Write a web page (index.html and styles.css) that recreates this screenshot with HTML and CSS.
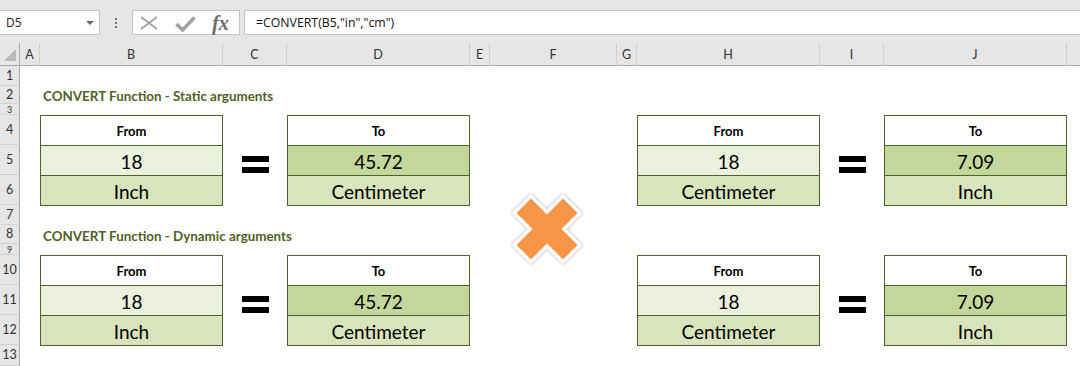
FILE: index.html
```html
<!DOCTYPE html>
<html>
<head>
<meta charset="utf-8">
<link rel="stylesheet" href="styles.css">
</head>
<body>
<div class="toolbar">
  <div class="namebox"><span class="nb-text">D5</span><span class="caret"></span></div>
  <div class="dots"><i></i><i></i><i></i></div>
  <div class="fxbox">
    <svg class="ic-cancel" width="18" height="14" viewBox="0 0 18 14"><path d="M1 1 L17 13 M17 1 L1 13" stroke="#a3a3a3" stroke-width="1.8" fill="none"/></svg>
    <svg class="ic-check" width="21" height="16" viewBox="0 0 21 16"><path d="M1.5 8 L7.5 14 L19.5 1.5" stroke="#a3a3a3" stroke-width="3.6" fill="none"/></svg>
    <span class="fx">fx</span>
  </div>
  <div class="formula">=CONVERT(B5,"in","cm")</div>
</div>

<div class="sheet">
  <div class="corner"><span class="tri"></span></div>
  <div class="ch">A</div><div class="ch">B</div><div class="ch">C</div><div class="ch">D</div><div class="ch">E</div><div class="ch">F</div><div class="ch">G</div><div class="ch">H</div><div class="ch">I</div><div class="ch">J</div><div class="ch ch-last"></div>

  <div class="rh r1">1</div>
  <div class="rh r2">2</div>
  <div class="rh r3 short">3</div>
  <div class="rh r4">4</div>
  <div class="rh r5">5</div>
  <div class="rh r6">6</div>
  <div class="rh r7">7</div>
  <div class="rh r8">8</div>
  <div class="rh r9 short">9</div>
  <div class="rh r10">10</div>
  <div class="rh r11">11</div>
  <div class="rh r12">12</div>
  <div class="rh r13">13</div>

  <div class="title t-static">CONVERT Function - Static arguments</div>
  <div class="title t-dynamic">CONVERT Function - Dynamic arguments</div>

  <div class="tbl set1 colB">
    <div class="cell head">From</div>
    <div class="cell val from">18</div>
    <div class="cell unit">Inch</div>
  </div>
  <div class="eq set1 colC"><i></i><i></i></div>
  <div class="tbl set1 colD">
    <div class="cell head">To</div>
    <div class="cell val to">45.72</div>
    <div class="cell unit">Centimeter</div>
  </div>

  <div class="tbl set1 colH">
    <div class="cell head">From</div>
    <div class="cell val from">18</div>
    <div class="cell unit">Centimeter</div>
  </div>
  <div class="eq set1 colI"><i></i><i></i></div>
  <div class="tbl set1 colJ">
    <div class="cell head">To</div>
    <div class="cell val to">7.09</div>
    <div class="cell unit">Inch</div>
  </div>

  <div class="tbl set2 colB">
    <div class="cell head">From</div>
    <div class="cell val from">18</div>
    <div class="cell unit">Inch</div>
  </div>
  <div class="eq set2 colC"><i></i><i></i></div>
  <div class="tbl set2 colD">
    <div class="cell head">To</div>
    <div class="cell val to">45.72</div>
    <div class="cell unit">Centimeter</div>
  </div>

  <div class="tbl set2 colH">
    <div class="cell head">From</div>
    <div class="cell val from">18</div>
    <div class="cell unit">Centimeter</div>
  </div>
  <div class="eq set2 colI"><i></i><i></i></div>
  <div class="tbl set2 colJ">
    <div class="cell head">To</div>
    <div class="cell val to">7.09</div>
    <div class="cell unit">Inch</div>
  </div>

  <svg class="xmark" width="80" height="82" viewBox="-40 -41 80 82">
    <path d="M0 -17 L16 -33 L33 -16 L17 0 L33 16 L16 33 L0 17 L-16 33 L-33 16 L-17 0 L-33 -16 L-16 -33 Z" fill="#f79646" stroke="#ffffff" stroke-width="3.5" stroke-linejoin="miter"/>
  </svg>
</div>
</body>
</html>
```

FILE: styles.css
```css
* { box-sizing: border-box; }
html, body { margin: 0; padding: 0; }
body {
  width: 1080px;
  height: 366px;
  overflow: hidden;
  background: #ffffff;
  font-family: "Open Sans", "Noto Sans", sans-serif;
}

/* ---------- formula bar ---------- */
.toolbar {
  height: 43px;
  background: #e6e6e6;
  padding-top: 10px;
  display: flex;
  align-items: flex-start;
}
.namebox {
  width: 100px;
  height: 25px;
  background: #fff;
  border: 1px solid #c6c6c6;
  border-left: none;
  display: flex;
  align-items: center;
  justify-content: space-between;
  padding: 0 6px 0 6px;
}
.nb-text { font-size: 12px; color: #222; }
.caret {
  width: 0; height: 0;
  border-left: 4px solid transparent;
  border-right: 4px solid transparent;
  border-top: 4px solid #6b6b6b;
  margin-right: -1px;
}
.dots {
  width: 32px;
  height: 25px;
  display: flex;
  flex-direction: column;
  align-items: center;
  justify-content: center;
  gap: 2px;
}
.dots i { display: block; width: 2px; height: 2px; background: #6e6e6e; }
.fxbox {
  width: 108px;
  height: 25px;
  background: #fff;
  border: 1px solid #c6c6c6;
  display: flex;
  align-items: center;
  padding-left: 7px;
}
.ic-cancel { margin-top: 1px; }
.ic-check { margin-left: 17px; margin-top: 2px; }
.fx {
  margin-left: 16px;
  font-family: "Liberation Serif", "DejaVu Serif", serif;
  font-style: italic;
  font-weight: bold;
  font-size: 21px;
  color: #6f6f6f;
  line-height: 20px;
  letter-spacing: -0.5px;
}
.formula {
  flex: 1;
  margin-left: 4px;
  height: 25px;
  background: #fff;
  border: 1px solid #c6c6c6;
  border-right: none;
  font-size: 12.3px;
  color: #111;
  line-height: 23px;
  padding-left: 11px;
}

/* ---------- sheet grid ---------- */
.sheet {
  position: relative;
  display: grid;
  grid-template-columns: 20px 20px 183px 64px 183px 20px 127px 20px 183px 64px 183px 1fr;
  grid-template-rows: 23px 20px 18px 11px 30px 30px 30px 20px 19px 11px 30px 30px 30px 21px;
  font-family: "Lato", "Open Sans", sans-serif;
}
.corner {
  grid-row: 1; grid-column: 1;
  background: #e6e6e6;
  border-right: 1px solid #a9a9a9;
  border-bottom: 1px solid #a9a9a9;
  position: relative;
}
.tri {
  position: absolute;
  right: 3px; bottom: 4px;
  width: 0; height: 0;
  border-left: 12px solid transparent;
  border-bottom: 12px solid #b9b9b9;
}
.ch {
  grid-row: 1;
  background: #e6e6e6;
  border-bottom: 1px solid #a9a9a9;
  border-right: 1px solid #cfcfcf;
  font-size: 12.5px;
  color: #333;
  display: flex;
  align-items: center;
  justify-content: center;
  padding-top: 1px;
}
.ch-last { border-right: none; }

.rh {
  grid-column: 1;
  background: #e6e6e6;
  border-right: 1px solid #a9a9a9;
  border-bottom: 1px solid #d2d2d2;
  font-size: 12.5px;
  color: #333;
  display: flex;
  align-items: center;
  justify-content: center;
  overflow: hidden;
  line-height: 1;
  padding-top: 1px;
}
.rh.short { font-size: 9px; padding-top: 0; }
.r1 { grid-row: 2; } .r2 { grid-row: 3; } .r3 { grid-row: 4; }
.r4 { grid-row: 5; } .r5 { grid-row: 6; } .r6 { grid-row: 7; }
.r7 { grid-row: 8; } .r8 { grid-row: 9; } .r9 { grid-row: 10; }
.r10 { grid-row: 11; } .r11 { grid-row: 12; } .r12 { grid-row: 13; }
.r13 { grid-row: 14; }

.title {
  grid-column: 3 / span 3;
  align-self: end;
  padding-left: 3px;
  font-weight: bold;
  font-size: 13.4px;
  color: #4f6228;
  line-height: 16px;
  white-space: nowrap;
}
.t-static { grid-row: 3; margin-bottom: 0; }
.t-dynamic { grid-row: 9; margin-bottom: 0; }

/* tables */
.tbl {
  align-self: start;
  display: flex;
  flex-direction: column;
  border: 1px solid #4f6228;
  background: #fff;
}
.set1 { grid-row: 5 / span 3; }
.set2 { grid-row: 11 / span 3; }
.colB { grid-column: 3; }
.colC { grid-column: 4; }
.colD { grid-column: 5; }
.colH { grid-column: 9; }
.colI { grid-column: 10; }
.colJ { grid-column: 11; }

.cell {
  height: 29px;
  display: flex;
  align-items: center;
  justify-content: center;
  color: #000;
}
.cell + .cell { border-top: 1px solid #4f6228; height: 30px; }
.head { font-weight: bold; font-size: 13px; padding-top: 1px; background: #ffffff; }
.val, .unit { font-size: 19px; padding-top: 1px; }
.from { background: #ebf1de; }
.to { background: #c4d79b; }
.unit { background: #d8e4bc; }

/* equals signs */
.eq {
  align-self: start;
  justify-self: center;
  margin-top: 41px;
  display: flex;
  flex-direction: column;
  gap: 5px;
}
.eq.set1, .eq.set2 { grid-row-end: span 3; }
.eq i { display: block; width: 27px; height: 6px; background: #000; }

/* floating orange cross */
.xmark {
  position: absolute;
  left: 507px;
  top: 145px;
  filter: drop-shadow(0 0 1.5px rgba(0,0,0,0.35));
}
```
